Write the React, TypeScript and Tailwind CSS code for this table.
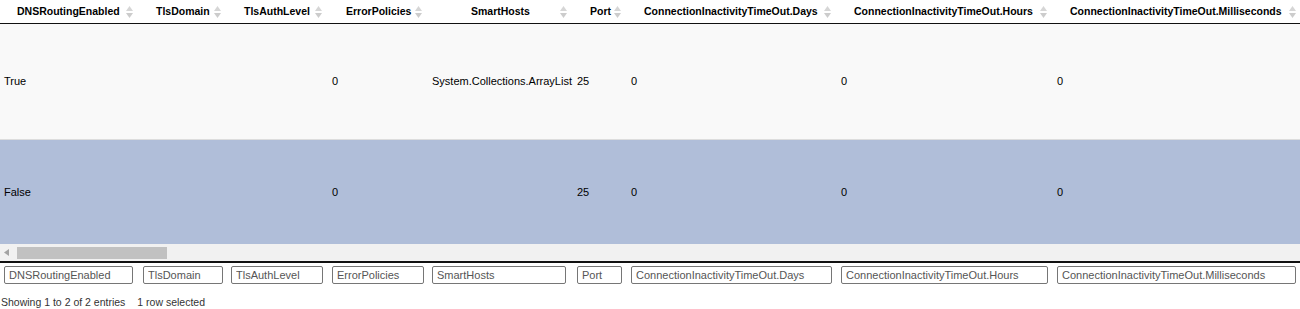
type Col = {
  name: string;
  width: number;
  input: number;
  headPad: number;
};

const cols: Col[] = [
  { name: "DNSRoutingEnabled", width: 139, input: 129, headPad: 17 },
  { name: "TlsDomain", width: 88, input: 80, headPad: 17 },
  { name: "TlsAuthLevel", width: 101, input: 92, headPad: 17 },
  { name: "ErrorPolicies", width: 100, input: 92, headPad: 18 },
  { name: "SmartHosts", width: 145, input: 134, headPad: 43 },
  { name: "Port", width: 54, input: 45, headPad: 17 },
  { name: "ConnectionInactivityTimeOut.Days", width: 210, input: 201, headPad: 17 },
  { name: "ConnectionInactivityTimeOut.Hours", width: 216, input: 207, headPad: 17 },
  { name: "ConnectionInactivityTimeOut.Milliseconds", width: 249, input: 239, headPad: 17 },
];

const rows = [
  { values: ["True", "", "", "0", "System.Collections.ArrayList", "25", "0", "0", "0"], selected: false },
  { values: ["False", "", "", "0", "", "25", "0", "0", "0"], selected: true },
];

function SortIcon() {
  return (
    <svg width="7" height="12" viewBox="0 0 7 12" className="absolute right-[6px] top-[6px]">
      <path d="M0 5 L3.5 0 L7 5 Z" fill="#d6d6d6" />
      <path d="M0 7 L3.5 12 L7 7 Z" fill="#cccccc" />
    </svg>
  );
}

export default function App() {
  return (
    <div className="h-[309px] w-[1300px] overflow-hidden bg-white font-['Liberation_Sans',Arial,sans-serif] text-black">
      {/* Header */}
      <div className="flex h-[24px] border-b border-[#111]">
        {cols.map((c) => (
          <div
            key={c.name}
            className="relative flex h-full shrink-0 items-center whitespace-nowrap text-[10.5px] font-bold"
            style={{ width: c.width, paddingLeft: c.headPad }}
          >
            {c.name}
            <SortIcon />
          </div>
        ))}
      </div>

      {/* Body */}
      {rows.map((r, i) => (
        <div
          key={i}
          className={
            r.selected
              ? "flex h-[104px] bg-[#b0bed9]"
              : "flex h-[116px] border-b border-[#ddd] bg-[#f9f9f9]"
          }
        >
          {cols.map((c, j) => (
            <div
              key={c.name}
              className="flex shrink-0 items-center whitespace-nowrap pl-[4px] text-[11px]"
              style={{ width: c.width }}
            >
              {r.values[j]}
            </div>
          ))}
        </div>
      ))}

      {/* Horizontal scrollbar */}
      <div className="flex h-[17px] items-center bg-[#f1f1f1]">
        <svg width="5" height="7" viewBox="0 0 5 7" className="ml-[4px]">
          <path d="M5 0 L0 3.5 L5 7 Z" fill="#a3a3a3" />
        </svg>
        <div className="ml-[8px] h-[12px] w-[150px] bg-[#c1c1c1]" />
      </div>

      {/* Footer filters */}
      <div className="flex border-t-2 border-[#111] pt-[3px]">
        {cols.map((c) => (
          <div key={c.name} className="shrink-0 pl-[4px]" style={{ width: c.width }}>
            <input
              readOnly
              placeholder={c.name}
              className="block h-[18px] rounded-[2px] border border-[#767676] bg-white px-[4px] text-[11px] outline-none placeholder:text-[#555]"
              style={{ width: c.input }}
            />
          </div>
        ))}
      </div>

      {/* Info */}
      <div className="mt-[12px] flex gap-[12px] pl-[1px] text-[10.5px] leading-[13px] text-[#333]">
        <span>Showing 1 to 2 of 2 entries</span>
        <span>1 row selected</span>
      </div>
    </div>
  );
}
